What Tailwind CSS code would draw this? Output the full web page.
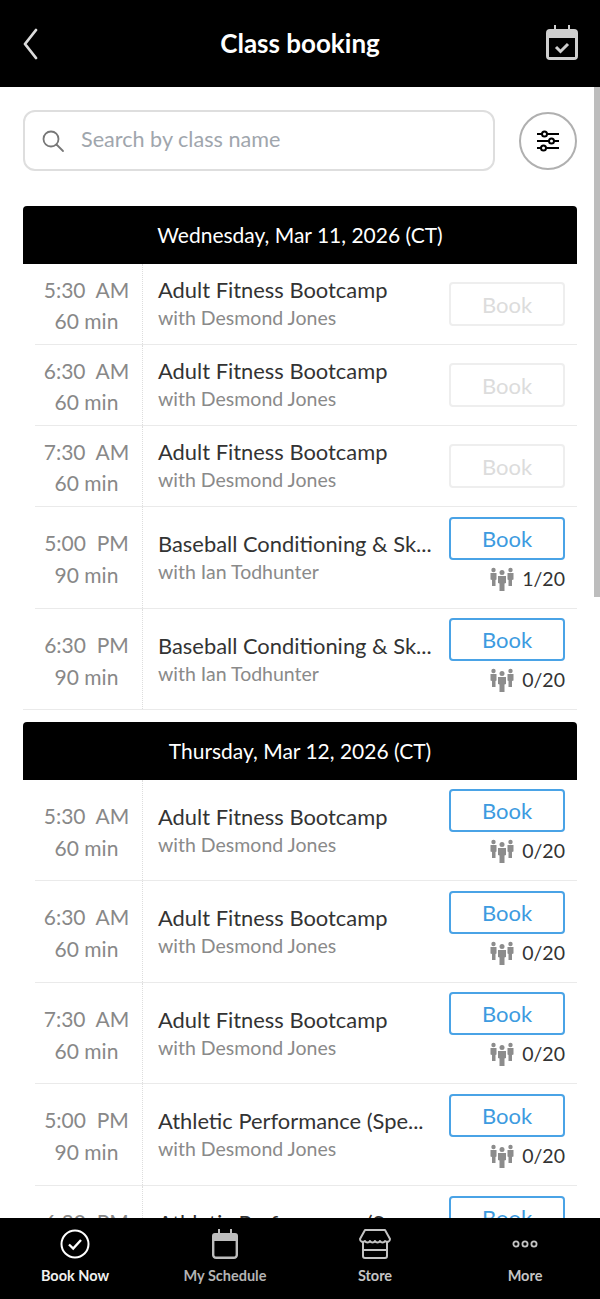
<!doctype html>
<html><head><meta charset="utf-8"><script src="https://cdn.jsdelivr.net/npm/@tailwindcss/browser@4"></script></head>
<body class="bg-white">
<svg class="hidden"><defs>
<symbol id="ppl" viewBox="0 0 24 24"><g fill="#8c8c8c"><circle cx="3.500" cy="3" r="2.200"/><path d="M.5 6h6v6.500l-1 .5v6H2v-6l-1.500-.5z"/><circle cx="20.500" cy="3" r="2.200"/><path d="M17.500 6h6v6.500l-1.500 .5v6h-3.500v-6l-1-.5z"/><circle cx="12" cy="5.500" r="2.500"/><path d="M8 9h8v7l-1.500 .5V24h-5v-7.500L8 16z"/></g></symbol>
</defs></svg>
<div class="relative flex flex-col h-[1299px] w-[600px] overflow-hidden font-['Lato','Noto_Sans',sans-serif]">
<header class="h-[87px] shrink-0 bg-black flex items-center justify-between pl-[22px] pr-[22px]">
<div class="w-[32px]"><svg width="20" height="32" viewBox="0 0 20 32" fill="none" stroke="#dcdcdc" stroke-width="2.800" stroke-linecap="round" stroke-linejoin="round"><path d="M14 2 3 16l11 14"/></svg></div>
<h1 class="text-white font-bold text-[26px] leading-none -mt-[2px]">Class booking</h1>
<svg class="-mt-[2px]" width="32" height="35" viewBox="0 0 32 35"><path fill="#cfcfcf" d="M8 0h2v4h12V0h2v4h4a4 4 0 0 1 4 4v23a4 4 0 0 1-4 4H4a4 4 0 0 1-4-4V8a4 4 0 0 1 4-4h4z"/><rect x="3" y="13" width="26" height="19" fill="#000"/><path d="M10 22l4.500 4.500L22 19" fill="none" stroke="#cfcfcf" stroke-width="3"/></svg>
</header>
<main class="flex-1 min-h-0 overflow-hidden px-[23px]">
<div class="flex items-center gap-[24px] mt-[23px] mb-[35px]">
<div class="flex items-center h-[61px] w-[473px] border-2 border-[#dedede] rounded-[12px] pl-[16px]">
<svg width="24" height="24" viewBox="0 0 24 24" fill="none" stroke="#777" stroke-width="1.800" stroke-linecap="round"><circle cx="10" cy="10" r="7.500"/><path d="M15.500 15.500l6.500 6.500"/></svg>
<span class="ml-[16px] -mt-[3px] text-[21.600px] text-[#a0a6ad]">Search by class name</span>
</div>
<div class="flex items-center justify-center w-[58px] h-[58px] rounded-full border-2 border-[#b0b0b0] shrink-0">
<svg width="24" height="22" viewBox="0 0 24 22" fill="none" stroke="#000" stroke-width="2"><path d="M1 4h5M11 4h12M1 11h12M18 11h5M1 18h4M10 18h13"/><circle cx="8.500" cy="4" r="2.500"/><circle cx="15.500" cy="11" r="2.500"/><circle cx="7.500" cy="18" r="2.500"/></svg>
</div>
</div>

<section>
<div class="h-[58px] bg-black text-white rounded-t-[4px] flex items-center justify-center text-[21px]">Wednesday, Mar 11, 2026 (CT)</div>
<div class="ml-[12px] h-[81px] flex border-b border-[#eaeaea]"><div class="w-[108px] pr-[4px] pt-[10px] border-r border-dotted border-[#dddddd] text-center text-[21px] text-[#888] leading-[31px]"><div class="whitespace-pre">5:30  AM</div><div>60 min</div></div><div class="flex-1 pl-[15px] pt-[12px]"><div class="text-[21.900px] leading-[28px] text-[#333] whitespace-nowrap">Adult Fitness Bootcamp</div><div class="text-[19.500px] leading-[28px] text-[#8a8a8a]">with Desmond Jones</div></div><div class="w-[128px] pt-[18px] pr-[12px]"><div class="h-[44px] rounded-[4px] border-2 border-[#eeeeee] flex items-center justify-center text-[22px] text-[#dcdcdc]">Book</div></div></div>
<div class="ml-[12px] h-[81px] flex border-b border-[#eaeaea]"><div class="w-[108px] pr-[4px] pt-[10px] border-r border-dotted border-[#dddddd] text-center text-[21px] text-[#888] leading-[31px]"><div class="whitespace-pre">6:30  AM</div><div>60 min</div></div><div class="flex-1 pl-[15px] pt-[12px]"><div class="text-[21.900px] leading-[28px] text-[#333] whitespace-nowrap">Adult Fitness Bootcamp</div><div class="text-[19.500px] leading-[28px] text-[#8a8a8a]">with Desmond Jones</div></div><div class="w-[128px] pt-[18px] pr-[12px]"><div class="h-[44px] rounded-[4px] border-2 border-[#eeeeee] flex items-center justify-center text-[22px] text-[#dcdcdc]">Book</div></div></div>
<div class="ml-[12px] h-[81px] flex border-b border-[#eaeaea]"><div class="w-[108px] pr-[4px] pt-[10px] border-r border-dotted border-[#dddddd] text-center text-[21px] text-[#888] leading-[31px]"><div class="whitespace-pre">7:30  AM</div><div>60 min</div></div><div class="flex-1 pl-[15px] pt-[12px]"><div class="text-[21.900px] leading-[28px] text-[#333] whitespace-nowrap">Adult Fitness Bootcamp</div><div class="text-[19.500px] leading-[28px] text-[#8a8a8a]">with Desmond Jones</div></div><div class="w-[128px] pt-[18px] pr-[12px]"><div class="h-[44px] rounded-[4px] border-2 border-[#eeeeee] flex items-center justify-center text-[22px] text-[#dcdcdc]">Book</div></div></div>
<div class="ml-[12px] h-[102px] flex border-b border-[#eaeaea]"><div class="w-[108px] pr-[4px] pt-[20px] border-r border-dotted border-[#dddddd] text-center text-[21px] text-[#888] leading-[32px]"><div class="whitespace-pre">5:00  PM</div><div>90 min</div></div><div class="flex-1 pl-[15px] pt-[23px]"><div class="text-[21.900px] leading-[28px] text-[#333] whitespace-nowrap">Baseball Conditioning &amp; Sk...</div><div class="text-[19.500px] leading-[28px] text-[#8a8a8a]">with Ian Todhunter</div></div><div class="w-[128px] pt-[10px] pr-[12px]"><div class="h-[43px] rounded-[4px] border-2 border-[#4aa3e6] flex items-center justify-center text-[22px] text-[#3d9be0]">Book</div><div class="flex items-center justify-end gap-[8px] mt-[7px] text-[19.500px] leading-[24px] text-[#333]"><svg width="24" height="24"><use href="#ppl"/></svg>1/20</div></div></div>
<div class="h-[101px] flex border-b border-[#eaeaea]"><div class="w-[120px] pl-[8px] pt-[20px] border-r border-dotted border-[#dddddd] text-center text-[21px] text-[#888] leading-[32px]"><div class="whitespace-pre">6:30  PM</div><div>90 min</div></div><div class="flex-1 pl-[15px] pt-[23px]"><div class="text-[21.900px] leading-[28px] text-[#333] whitespace-nowrap">Baseball Conditioning &amp; Sk...</div><div class="text-[19.500px] leading-[28px] text-[#8a8a8a]">with Ian Todhunter</div></div><div class="w-[128px] pt-[9px] pr-[12px]"><div class="h-[43px] rounded-[4px] border-2 border-[#4aa3e6] flex items-center justify-center text-[22px] text-[#3d9be0]">Book</div><div class="flex items-center justify-end gap-[8px] mt-[7px] text-[19.500px] leading-[24px] text-[#333]"><svg width="24" height="24"><use href="#ppl"/></svg>0/20</div></div></div>
</section>

<section class="mt-[12px]">
<div class="h-[58px] bg-black text-white rounded-t-[4px] flex items-center justify-center text-[21px]">Thursday, Mar 12, 2026 (CT)</div>
<div class="ml-[12px] h-[101px] flex border-b border-[#eaeaea]"><div class="w-[108px] pr-[4px] pt-[20px] border-r border-dotted border-[#dddddd] text-center text-[21px] text-[#888] leading-[32px]"><div class="whitespace-pre">5:30  AM</div><div>60 min</div></div><div class="flex-1 pl-[15px] pt-[23px]"><div class="text-[21.900px] leading-[28px] text-[#333] whitespace-nowrap">Adult Fitness Bootcamp</div><div class="text-[19.500px] leading-[28px] text-[#8a8a8a]">with Desmond Jones</div></div><div class="w-[128px] pt-[9px] pr-[12px]"><div class="h-[43px] rounded-[4px] border-2 border-[#4aa3e6] flex items-center justify-center text-[22px] text-[#3d9be0]">Book</div><div class="flex items-center justify-end gap-[8px] mt-[7px] text-[19.500px] leading-[24px] text-[#333]"><svg width="24" height="24"><use href="#ppl"/></svg>0/20</div></div></div>
<div class="ml-[12px] h-[102px] flex border-b border-[#eaeaea]"><div class="w-[108px] pr-[4px] pt-[20px] border-r border-dotted border-[#dddddd] text-center text-[21px] text-[#888] leading-[32px]"><div class="whitespace-pre">6:30  AM</div><div>60 min</div></div><div class="flex-1 pl-[15px] pt-[23px]"><div class="text-[21.900px] leading-[28px] text-[#333] whitespace-nowrap">Adult Fitness Bootcamp</div><div class="text-[19.500px] leading-[28px] text-[#8a8a8a]">with Desmond Jones</div></div><div class="w-[128px] pt-[10px] pr-[12px]"><div class="h-[43px] rounded-[4px] border-2 border-[#4aa3e6] flex items-center justify-center text-[22px] text-[#3d9be0]">Book</div><div class="flex items-center justify-end gap-[8px] mt-[7px] text-[19.500px] leading-[24px] text-[#333]"><svg width="24" height="24"><use href="#ppl"/></svg>0/20</div></div></div>
<div class="ml-[12px] h-[101px] flex border-b border-[#eaeaea]"><div class="w-[108px] pr-[4px] pt-[20px] border-r border-dotted border-[#dddddd] text-center text-[21px] text-[#888] leading-[32px]"><div class="whitespace-pre">7:30  AM</div><div>60 min</div></div><div class="flex-1 pl-[15px] pt-[23px]"><div class="text-[21.900px] leading-[28px] text-[#333] whitespace-nowrap">Adult Fitness Bootcamp</div><div class="text-[19.500px] leading-[28px] text-[#8a8a8a]">with Desmond Jones</div></div><div class="w-[128px] pt-[9px] pr-[12px]"><div class="h-[43px] rounded-[4px] border-2 border-[#4aa3e6] flex items-center justify-center text-[22px] text-[#3d9be0]">Book</div><div class="flex items-center justify-end gap-[8px] mt-[7px] text-[19.500px] leading-[24px] text-[#333]"><svg width="24" height="24"><use href="#ppl"/></svg>0/20</div></div></div>
<div class="ml-[12px] h-[102px] flex border-b border-[#eaeaea]"><div class="w-[108px] pr-[4px] pt-[20px] border-r border-dotted border-[#dddddd] text-center text-[21px] text-[#888] leading-[32px]"><div class="whitespace-pre">5:00  PM</div><div>90 min</div></div><div class="flex-1 pl-[15px] pt-[23px]"><div class="text-[21.900px] leading-[28px] text-[#333] whitespace-nowrap">Athletic Performance (Spe...</div><div class="text-[19.500px] leading-[28px] text-[#8a8a8a]">with Desmond Jones</div></div><div class="w-[128px] pt-[10px] pr-[12px]"><div class="h-[43px] rounded-[4px] border-2 border-[#4aa3e6] flex items-center justify-center text-[22px] text-[#3d9be0]">Book</div><div class="flex items-center justify-end gap-[8px] mt-[7px] text-[19.500px] leading-[24px] text-[#333]"><svg width="24" height="24"><use href="#ppl"/></svg>0/20</div></div></div>
<div class="ml-[12px] h-[101px] flex border-b border-[#eaeaea]"><div class="w-[108px] pr-[4px] pt-[20px] border-r border-dotted border-[#dddddd] text-center text-[21px] text-[#888] leading-[32px]"><div class="whitespace-pre">6:30  PM</div><div>90 min</div></div><div class="flex-1 pl-[15px] pt-[23px]"><div class="text-[21.900px] leading-[28px] text-[#333] whitespace-nowrap">Athletic Performance (Spe...</div><div class="text-[19.500px] leading-[28px] text-[#8a8a8a]">with Desmond Jones</div></div><div class="w-[128px] pt-[10px] pr-[12px]"><div class="h-[43px] rounded-[4px] border-2 border-[#4aa3e6] flex items-center justify-center text-[22px] text-[#3d9be0]">Book</div></div></div>
</section>
</main>
<nav class="h-[81px] shrink-0 bg-black grid grid-cols-4 text-[14.500px] font-bold text-center relative">
<div class="flex flex-col items-center pt-[11px] text-[#f0f0f0]"><svg width="30" height="30" viewBox="0 0 30 30" fill="none" stroke="#fff" stroke-width="2"><circle cx="15" cy="15" r="13.500"/><path d="M9 15.500l4.200 4L21 11" stroke-width="2.400"/></svg><span class="mt-[7px] leading-[20px]">Book Now</span></div>
<div class="flex flex-col items-center pt-[11px] text-[#b4b4b4]"><svg width="26" height="30" viewBox="0 0 26 30" fill="none" stroke="#bdbdbd" stroke-width="2.400"><path fill="#bdbdbd" d="M6 0h2v4h10V0h2v4h3a3 3 0 0 1 3 3v5H0V7a3 3 0 0 1 3-3h3z" stroke="none"/><path d="M1.200 9v16.500a3 3 0 0 0 3 3.300h17.600a3 3 0 0 0 3-3.300V9"/></svg><span class="mt-[7px] leading-[20px]">My Schedule</span></div>
<div class="flex flex-col items-center pt-[11px] text-[#c4c4c4]"><svg width="32" height="30" viewBox="0 0 32 30" fill="none" stroke="#c4c4c4" stroke-width="2" stroke-linejoin="round"><path d="M6 1h20l5 9c0 3-3 3.500-5 2-1 2-4 2-5 0-1 2-4 2-5 0-1 2-4 2-5 0-1 2-4 2-5 0-2 1.500-5 1-5-2z"/><path d="M4 13v14a2 2 0 0 0 2 2h20a2 2 0 0 0 2-2V13M4 21h24"/></svg><span class="mt-[7px] leading-[20px]">Store</span></div>
<div class="flex flex-col items-center pt-[11px] text-[#c4c4c4]"><svg width="28" height="30" viewBox="0 0 28 30" fill="none" stroke="#c4c4c4" stroke-width="1.800"><circle cx="5" cy="15" r="2.600"/><circle cx="14" cy="15" r="2.600"/><circle cx="23" cy="15" r="2.600"/></svg><span class="mt-[7px] leading-[20px]">More</span></div>
</nav>
<div class="absolute right-0 top-[87px] w-[6px] h-[510px] bg-[#bdbdbd]"></div>
</div>
</body></html>
